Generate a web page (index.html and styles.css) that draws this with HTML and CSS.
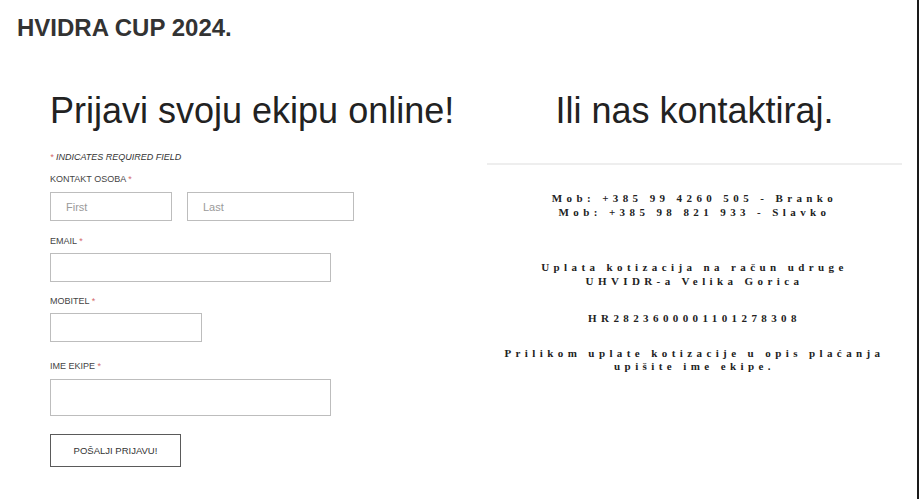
FILE: index.html
```html
<!DOCTYPE html>
<html lang="hr">
<head>
    <meta charset="UTF-8">
    <meta name="viewport" content="width=device-width, initial-scale=1.0">
    <title>Hvidra Cup 2024. - Prijava</title>
    <link rel="stylesheet" href="styles.css">
</head>
<body>
    <div class="page">
        <h2 class="site-title">HVIDRA CUP 2024.</h2>

        <div class="columns">
            <!-- Left: registration form -->
            <section class="signup">
                <h1 class="big-heading">Prijavi svoju ekipu online!</h1>
                <form id="signupForm">
                    <p class="required-note"><span class="req">*</span> INDICATES REQUIRED FIELD</p>

                    <div class="field">
                        <label>KONTAKT OSOBA <span class="req">*</span></label>
                        <div class="name-row">
                            <input type="text" class="input first" name="first" placeholder="First">
                            <input type="text" class="input last" name="last" placeholder="Last">
                        </div>
                    </div>

                    <div class="field">
                        <label for="email">EMAIL <span class="req">*</span></label>
                        <input type="email" id="email" class="input wide" name="email">
                    </div>

                    <div class="field field-mobitel">
                        <label for="mobitel">MOBITEL <span class="req">*</span></label>
                        <input type="tel" id="mobitel" class="input short" name="mobitel">
                    </div>

                    <div class="field field-ekipa">
                        <label for="ekipa">IME EKIPE <span class="req">*</span></label>
                        <input type="text" id="ekipa" class="input wide tall" name="ekipa">
                    </div>

                    <button type="submit" class="submit-button">POŠALJI PRIJAVU!</button>
                </form>
            </section>

            <!-- Right: contact info -->
            <section class="contact">
                <h1 class="big-heading">Ili nas kontaktiraj.</h1>
                <div class="divider"></div>
                <p class="phones">Mob: +385 99 4260 505 - Branko<br>Mob: +385 98 821 933 - Slavko</p>
                <p class="payment">Uplata kotizacija na račun udruge<br>UHVIDR-a Velika Gorica</p>
                <p class="iban">HR2823600001101278308</p>
                <p>Prilikom uplate kotizacije u opis plaćanja<br>upišite ime ekipe.</p>
            </section>
        </div>
    </div>
</body>
</html>
```

FILE: styles.css
```css
/* Basic reset */
* {
    margin: 0;
    padding: 0;
    box-sizing: border-box;
}

body {
    background-color: #fff;
    font-family: "Liberation Sans", Arial, sans-serif;
    color: #333;
    overflow: hidden;
}

/* Page frame with the dark edge on the right */
.page {
    width: 919px;
    height: 499px;
    border-right: 2px solid #1a1a1a;
}

.site-title {
    padding: 14px 0 0 17px;
    font-size: 24px;
    line-height: 28px;
    font-weight: bold;
    color: #333;
}

/* Two columns */
.columns {
    display: grid;
    grid-template-columns: 415px 415px;
    column-gap: 22px;
    padding-left: 50px;
    margin-top: 49px;
}

.big-heading {
    font-size: 36px;
    line-height: 40px;
    font-weight: normal;
    color: #222;
    white-space: nowrap;
}

/* Form */
.required-note {
    margin-top: 20px;
    font-size: 9px;
    line-height: 12px;
    font-style: italic;
    color: #333;
}

.req {
    color: #d46a6a;
}

.field {
    margin-top: 14px;
}

.required-note + .field {
    margin-top: 10px;
}

.field-mobitel {
    margin-top: 13px;
}

.field-ekipa {
    margin-top: 18px;
}

label {
    display: block;
    font-size: 9px;
    line-height: 12px;
    color: #444;
    margin-bottom: 6px;
}

.field:first-of-type label {
    margin-bottom: 7px;
}

.name-row {
    display: flex;
    gap: 15px;
}

.input {
    display: block;
    height: 29px;
    padding: 0 15px;
    border: 1px solid #bdbdbd;
    background: #fff;
    font-family: "Liberation Sans", Arial, sans-serif;
    font-size: 11px;
    color: #333;
}

.input::placeholder {
    color: #9a9a9a;
}

.input.first { width: 122px; }
.input.last { width: 167px; }
.input.wide { width: 281px; }
.input.short { width: 152px; }
.input.tall { height: 37px; }

.field-ekipa label {
    margin-bottom: 7px;
}

.submit-button {
    display: block;
    margin-top: 18px;
    width: 131px;
    height: 33px;
    border: 1px solid #5a5a5a;
    background: #fff;
    font-family: "Liberation Sans", Arial, sans-serif;
    font-size: 9.5px;
    color: #333;
    cursor: pointer;
}

/* Contact column */
.contact {
    text-align: center;
}

.divider {
    margin-top: 32px;
    border-top: 2px solid #eeeeee;
}

.contact p {
    font-family: "Liberation Serif", "Times New Roman", serif;
    font-weight: bold;
    font-size: 11px;
    line-height: 13.5px;
    letter-spacing: 4.4px;
    color: #222;
}

.contact .phones {
    margin-top: 27px;
}

.contact .payment {
    margin-top: 42px;
}

.contact .iban {
    margin: 24px 0 21px;
}
```
